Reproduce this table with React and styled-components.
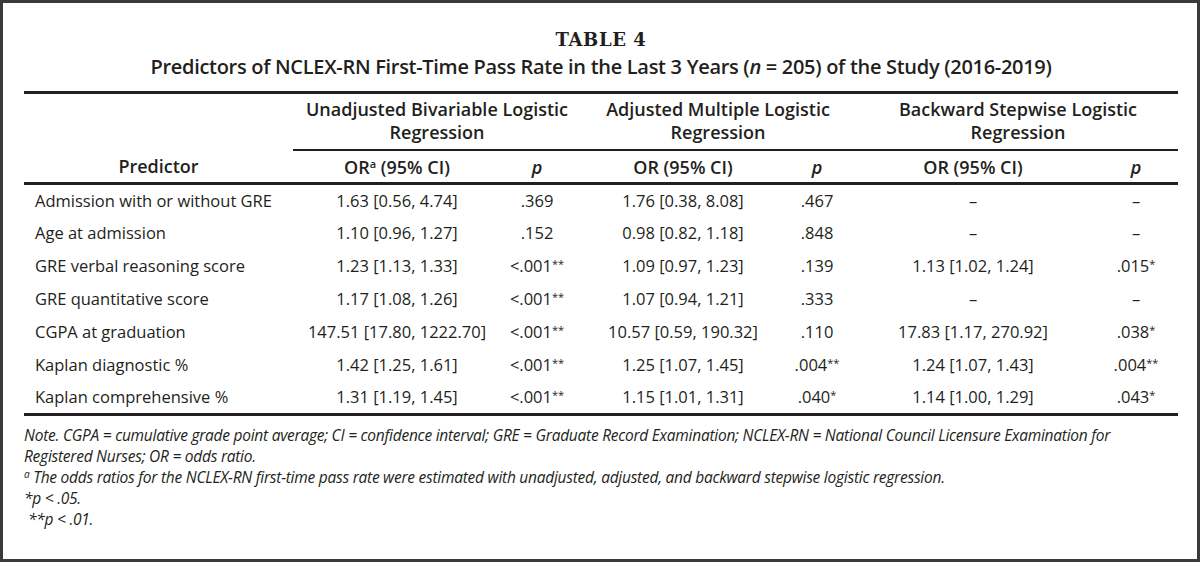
import React from 'react';
import styled, { createGlobalStyle } from 'styled-components';

const Global = createGlobalStyle`
  html, body { margin: 0; padding: 0; background: #fff; }
  body { font-family: "Open Sans", "Liberation Sans", sans-serif; color: #231f20; }
`;

const Frame = styled.div`
  box-sizing: border-box;
  width: 1200px;
  height: 562px;
  border: 3px solid #3a3a3a;
  padding: 25px 19px 0 21px;
  display: flex;
  flex-direction: column;
`;

const Caption = styled.div`
  display: flex;
  flex-direction: column;
  align-items: center;
`;

const Label = styled.div`
  font-family: "DejaVu Serif", "Liberation Serif", serif;
  font-weight: 700;
  font-size: 18px;
  letter-spacing: 0.6px;
  line-height: 24px;
`;

const Subtitle = styled.div`
  font-weight: 600;
  font-size: 20px;
  letter-spacing: -0.3px;
  line-height: 30px;
  em { font-weight: 600; }
`;

const Table = styled.table`
  width: 1154px;
  margin-top: 9px;
  border-collapse: collapse;
  table-layout: fixed;
  font-size: 16.5px;
  border-top: 3px solid #231f20;
  border-bottom: 3px solid #231f20;
`;

const GroupTh = styled.th`
  font-weight: 600;
  font-size: 18px;
  line-height: 23px;
  padding: 4px 0 5px ${p => p.$shift || 0}px;
  text-align: center;
  vertical-align: top;
  border-bottom: 2px solid #231f20;
  white-space: nowrap;
`;

const HeadRow = styled.tr`
  border-bottom: 3px solid #231f20;
`;

const ColTh = styled.th`
  font-weight: 600;
  font-size: 18px;
  line-height: 20px;
  height: 31px;
  padding: 0 ${p => p.$right || 0}px 0 0;
  text-align: center;
  vertical-align: middle;
  white-space: nowrap;
  sup { font-size: 11px; vertical-align: 6px; line-height: 0; }
`;

const PredTh = styled(ColTh)`
  vertical-align: bottom;
  padding-bottom: 6px;
`;

const Row = styled.tr`
  height: 33px;
`;

const Cell = styled.td`
  padding: 0 ${p => p.$right || 0}px 0 ${p => p.$left || 0}px;
  text-align: ${p => (p.$left ? 'left' : 'center')};
  white-space: nowrap;
  vertical-align: middle;
  line-height: 20px;
`;

const Star = styled.sup`
  font-size: 11px;
  vertical-align: 4px;
  line-height: 0;
`;

const Notes = styled.div`
  margin-top: 9px;
  font-style: italic;
  font-size: 15.5px;
  letter-spacing: -0.25px;
  line-height: 21px;
`;

const NoteLine = styled.div`
  padding-left: ${p => p.$indent || 0}px;
  white-space: nowrap;
  sup { font-size: 10px; vertical-align: 5px; line-height: 0; }
`;

const rows = [
  ['Admission with or without GRE', '1.63 [0.56, 4.74]', '.369', '1.76 [0.38, 8.08]', '.467', '–', '–'],
  ['Age at admission', '1.10 [0.96, 1.27]', '.152', '0.98 [0.82, 1.18]', '.848', '–', '–'],
  ['GRE verbal reasoning score', '1.23 [1.13, 1.33]', '<.001**', '1.09 [0.97, 1.23]', '.139', '1.13 [1.02, 1.24]', '.015*'],
  ['GRE quantitative score', '1.17 [1.08, 1.26]', '<.001**', '1.07 [0.94, 1.21]', '.333', '–', '–'],
  ['CGPA at graduation', '147.51 [17.80, 1222.70]', '<.001**', '10.57 [0.59, 190.32]', '.110', '17.83 [1.17, 270.92]', '.038*'],
  ['Kaplan diagnostic %', '1.42 [1.25, 1.61]', '<.001**', '1.25 [1.07, 1.45]', '.004**', '1.24 [1.07, 1.43]', '.004**'],
  ['Kaplan comprehensive %', '1.31 [1.19, 1.45]', '<.001**', '1.15 [1.01, 1.31]', '.040*', '1.14 [1.00, 1.29]', '.043*'],
];

function PValue({ value }) {
  const m = value.match(/^([^*]*)(\**)$/);
  if (!m || !m[2]) return value;
  return (
    <>
      {m[1]}
      <Star>{m[2]}</Star>
    </>
  );
}

export default function App() {
  return (
    <>
      <Global />
      <Frame>
        <Caption>
          <Label>TABLE 4</Label>
          <Subtitle>
            Predictors of NCLEX-RN First-Time Pass Rate in the Last 3 Years (<em>n</em> = 205) of the Study (2016-2019)
          </Subtitle>
        </Caption>
        <Table>
          <colgroup>
            <col style={{ width: 269 }} />
            <col style={{ width: 208 }} />
            <col style={{ width: 72 }} />
            <col style={{ width: 220 }} />
            <col style={{ width: 48 }} />
            <col style={{ width: 264 }} />
            <col style={{ width: 73 }} />
          </colgroup>
          <thead>
            <tr>
              <PredTh rowSpan={2}>Predictor</PredTh>
              <GroupTh colSpan={2} $shift={8}>Unadjusted Bivariable Logistic<br />Regression</GroupTh>
              <GroupTh colSpan={2} $shift={22}>Adjusted Multiple Logistic<br />Regression</GroupTh>
              <GroupTh colSpan={2} $shift={17}>Backward Stepwise Logistic<br />Regression</GroupTh>
            </tr>
            <HeadRow>
              <ColTh>OR<sup>a</sup> (95% CI)</ColTh>
              <ColTh><em>p</em></ColTh>
              <ColTh>OR (95% CI)</ColTh>
              <ColTh><em>p</em></ColTh>
              <ColTh>OR (95% CI)</ColTh>
              <ColTh $right={11}><em>p</em></ColTh>
            </HeadRow>
          </thead>
          <tbody>
            {rows.map(r => (
              <Row key={r[0]}>
                <Cell $left={11}>{r[0]}</Cell>
                <Cell>{r[1]}</Cell>
                <Cell><PValue value={r[2]} /></Cell>
                <Cell>{r[3]}</Cell>
                <Cell><PValue value={r[4]} /></Cell>
                <Cell>{r[5]}</Cell>
                <Cell $right={11}><PValue value={r[6]} /></Cell>
              </Row>
            ))}
          </tbody>
        </Table>
        <Notes>
          <NoteLine>
            Note. CGPA = cumulative grade point average; CI = confidence interval; GRE = Graduate Record Examination; NCLEX-RN = National Council Licensure Examination for
          </NoteLine>
          <NoteLine>Registered Nurses; OR = odds ratio.</NoteLine>
          <NoteLine>
            <sup>a</sup> The odds ratios for the NCLEX-RN first-time pass rate were estimated with unadjusted, adjusted, and backward stepwise logistic regression.
          </NoteLine>
          <NoteLine>*p &lt; .05.</NoteLine>
          <NoteLine $indent={4}>**p &lt; .01.</NoteLine>
        </Notes>
      </Frame>
    </>
  );
}
